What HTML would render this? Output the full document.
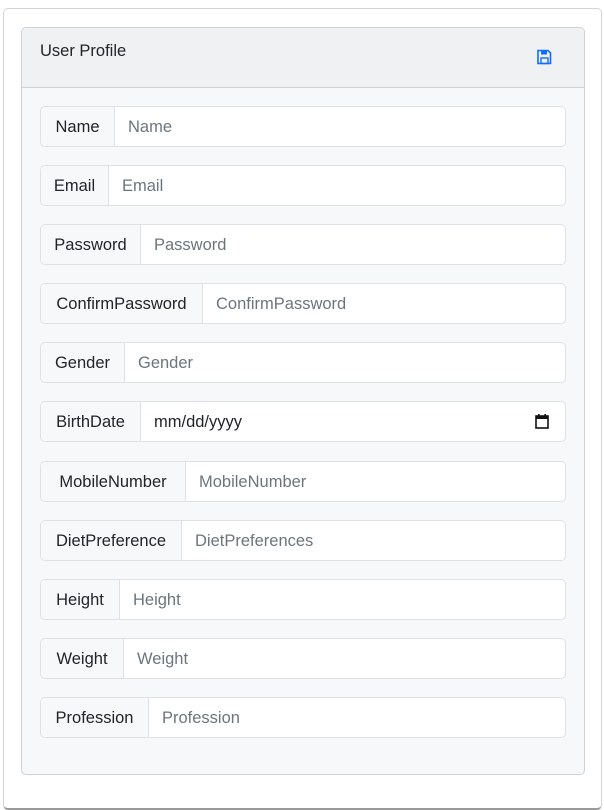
<!DOCTYPE html>
<html><head><style>
body{margin:0;background:#fff;font-family:"Liberation Sans",sans-serif;width:604px;height:810px;overflow:hidden;position:relative}
.outer{position:absolute;left:3px;top:8px;width:597px;height:799px;border:1px solid #d4d4d4;border-radius:5px;border-bottom:2px solid #999}
.card{position:absolute;left:21px;top:27px;width:562px;height:746px;border:1px solid #cfd1d4;border-radius:5px;background:#f7f8fa;overflow:hidden}
.hdr{height:59px;background:#f0f1f3;border-bottom:1px solid #cfd1d4;position:relative}
.hdr .t{position:absolute;left:18px;top:14px;font-size:16.5px;color:#212529}
.hdr svg{position:absolute;left:515px;top:21px}
.row{position:absolute;left:18px;width:524px;height:39px;border:1px solid #dee2e6;border-radius:5px;background:#fff;display:flex;overflow:hidden}
.lab{background:#f7f8fa;border-right:1px solid #dee2e6;font-size:16.5px;color:#212529;line-height:41px;text-align:center;flex:none}
.inp{padding-left:13px;font-size:16.5px;color:#6c757d;line-height:41px;flex:1;position:relative}
</style></head><body>
<div class="outer"></div>
<div class="card">
<div class="hdr"><span class="t">User Profile</span>
<svg width="15" height="16" viewBox="0 0 15 16"><path d="M1 1.5h10l2.5 2.5v10.5h-12.5z" fill="none" stroke="#0d6efd" stroke-width="1.6"/><rect x="4" y="1.5" width="6" height="4" fill="#0d6efd"/><rect x="4" y="9" width="7" height="5.5" fill="none" stroke="#0d6efd" stroke-width="1.4"/></svg></div>
</div>
<div style="position:absolute;left:22px;top:0">
<div class="row" style="top:106px"><div class="lab" style="width:73px">Name</div><div class="inp">Name</div></div>
<div class="row" style="top:165px"><div class="lab" style="width:67px">Email</div><div class="inp">Email</div></div>
<div class="row" style="top:224px"><div class="lab" style="width:99px">Password</div><div class="inp">Password</div></div>
<div class="row" style="top:283px"><div class="lab" style="width:161px">ConfirmPassword</div><div class="inp">ConfirmPassword</div></div>
<div class="row" style="top:342px"><div class="lab" style="width:83px">Gender</div><div class="inp">Gender</div></div>
<div class="row" style="top:401px"><div class="lab" style="width:99px">BirthDate</div><div class="inp" style="color:#212529">mm/dd/yyyy<svg style="position:absolute;right:16px;top:12px" width="14" height="15" viewBox="0 0 14 15"><rect x="1" y="2" width="12" height="12" fill="none" stroke="#111" stroke-width="1.6"/><rect x="1" y="2" width="12" height="3" fill="#111"/><rect x="3" y="0" width="1.6" height="3" fill="#111"/><rect x="9.4" y="0" width="1.6" height="3" fill="#111"/></svg></div></div>
<div class="row" style="top:461px"><div class="lab" style="width:144px">MobileNumber</div><div class="inp">MobileNumber</div></div>
<div class="row" style="top:520px"><div class="lab" style="width:140px">DietPreference</div><div class="inp">DietPreferences</div></div>
<div class="row" style="top:579px"><div class="lab" style="width:78px">Height</div><div class="inp">Height</div></div>
<div class="row" style="top:638px"><div class="lab" style="width:82px">Weight</div><div class="inp">Weight</div></div>
<div class="row" style="top:697px"><div class="lab" style="width:107px">Profession</div><div class="inp">Profession</div></div>
</div>
</body></html>
